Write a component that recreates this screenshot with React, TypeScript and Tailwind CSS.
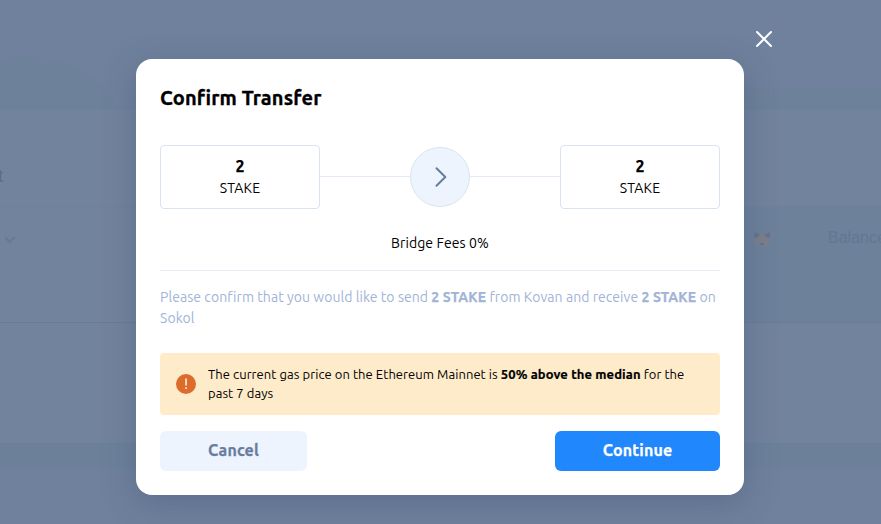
function Backdrop() {
  return (
    <div className="flex h-[524px] w-full flex-col bg-[#6f819c] font-['Liberation_Sans',Arial,sans-serif] text-[16px]">
      <div className="relative h-[110px] shrink-0 overflow-hidden">
        <div className="absolute -left-[70px] top-[57px] h-[140px] w-[190px] rounded-[50%] bg-[#6d819a]" />
        <div className="absolute right-0 top-[88px] h-[22px] w-[140px] bg-[#6d819a]" />
      </div>
      <div className="flex h-[333px] shrink-0 flex-col bg-[#72839d]">
        <div className="flex h-[97px] items-end justify-start border-b border-[#6f809a]">
          <span className="-ml-[2px] pb-[20px] text-[18px] leading-[20px] text-[#5b6c88]">t</span>
        </div>
        <div className="flex h-[116px] justify-between border-b border-[#6a7b96]">
          <div className="pl-[4px] pt-[29px]">
            <svg width="12" height="8" viewBox="0 0 12 8" fill="none" stroke="#677997" strokeWidth="2">
              <path d="M1 1.200 5.800 6 10.600 1.200" />
            </svg>
          </div>
          <div className="flex w-[160px] items-start bg-[#6d819b] pt-[21px] text-[#647693]">
            <span className="w-[33px] shrink-0 pl-[20px] leading-[20px]">i</span>
            <svg className="mt-[4px] h-[14px] w-[16px] shrink-0" viewBox="0 0 16 14">
              <path d="M0 0 6 2.500h4L16 0v11l-2 2.500-4-1H6l-4 1L0 11z" fill="#7c7f8b" />
              <path d="M0 0 6 2.500 4 5.500 0 6zM16 0l-6 2.500 2 3 4 .5z" fill="#6a738a" />
              <path d="M6.200 11.400h3.600v1.400H6.200z" fill="#5d6c86" />
            </svg>
            <span className="pl-[58px] leading-[20px]">Balance</span>
          </div>
        </div>
      </div>
      <div className="h-[26px] shrink-0 bg-[#6c809a]" />
      <div className="grow bg-[#6f819c]" />
    </div>
  );
}

function TokenBox() {
  return (
    <div className="flex h-16 w-40 flex-col items-center rounded border border-[#dae3f0] pt-[9px]">
      <span className="text-[16px] font-bold leading-[23px] [-webkit-text-stroke:0.25px]">2</span>
      <span className="text-[14px] leading-[21px] tracking-[0.15px]">STAKE</span>
    </div>
  );
}

export default function App() {
  return (
    <div className="relative h-[524px] w-full overflow-hidden">
      <Backdrop />
      <button className="absolute left-[755px] top-[30px]" aria-label="Close">
        <svg width="18" height="18" viewBox="0 0 18 18" fill="none" stroke="white" strokeWidth="2" strokeLinecap="round">
          <path d="M2 2 16 16M16 2 2 16" />
        </svg>
      </button>
      <div className="absolute left-[136px] top-[59px] flex h-[436px] w-[608px] flex-col rounded-2xl bg-white p-6 font-['Ubuntu','Noto_Sans',sans-serif] text-black shadow-[0_8px_32px_rgba(60,80,112,0.4)]">
        <h1 className="text-[20px] font-bold leading-[30px] tracking-[0.13px] [-webkit-text-stroke:0.35px]">Confirm Transfer</h1>
        <div className="mt-8 flex items-center">
          <TokenBox />
          <div className="mb-px h-px flex-1 bg-[#e3eaf6]" />
          <div className="flex h-[60px] w-[60px] items-center justify-center rounded-full border border-[#dae3f0] bg-[#edf4fe]">
            <svg width="14" height="22" viewBox="0 0 14 22" fill="none" stroke="#687d9d" strokeWidth="2" strokeLinecap="round" strokeLinejoin="round">
              <path d="M3.500 2.200 12.300 11 3.500 19.800" />
            </svg>
          </div>
          <div className="mb-px h-px flex-1 bg-[#e3eaf6]" />
          <TokenBox />
        </div>
        <div className="mt-6 text-center text-[14px] leading-[21px] tracking-[0.1px]">Bridge Fees 0%</div>
        <div className="mt-4 h-px shrink-0 bg-[#e9ebf7]" />
        <p className="mt-4 text-[14px] leading-[21px] tracking-[0.055px] text-[#9fb4d6]">
          Please confirm that you would like to send <b className="tracking-[0.15px] [-webkit-text-stroke:0.25px]">2 STAKE</b> from Kovan and receive{" "}
          <b className="tracking-[0.15px] [-webkit-text-stroke:0.25px]">2 STAKE</b> on Sokol
        </p>
        <div className="mt-6 flex h-[62px] shrink-0 items-center rounded bg-[#feebca] px-4">
          <svg className="shrink-0" width="20" height="20" viewBox="0 0 20 20">
            <circle cx="10" cy="10" r="10" fill="#dd6b2c" />
            <path d="M9.200 4.500h1.700v7H9.200zM9.200 13.200h1.700v1.700H9.200z" fill="#feebca" />
          </svg>
          <p className="ml-3 text-[13px] leading-[19px] tracking-[0.06px]">
            The current gas price on the Ethereum Mainnet is <b className="tracking-[0.1px] [-webkit-text-stroke:0.2px]">50% above the median</b> for the past 7 days
          </p>
        </div>
        <div className="mt-4 flex justify-between text-[16px] font-bold tracking-[0.15px] [-webkit-text-stroke:0.25px]">
          <button className="h-10 w-[147px] rounded-md bg-[#edf4fe] pb-0.5 text-[#687d9d]">Cancel</button>
          <button className="h-10 w-[165px] rounded-md bg-[#2187fc] pb-0.5 text-white">Continue</button>
        </div>
      </div>
    </div>
  );
}
